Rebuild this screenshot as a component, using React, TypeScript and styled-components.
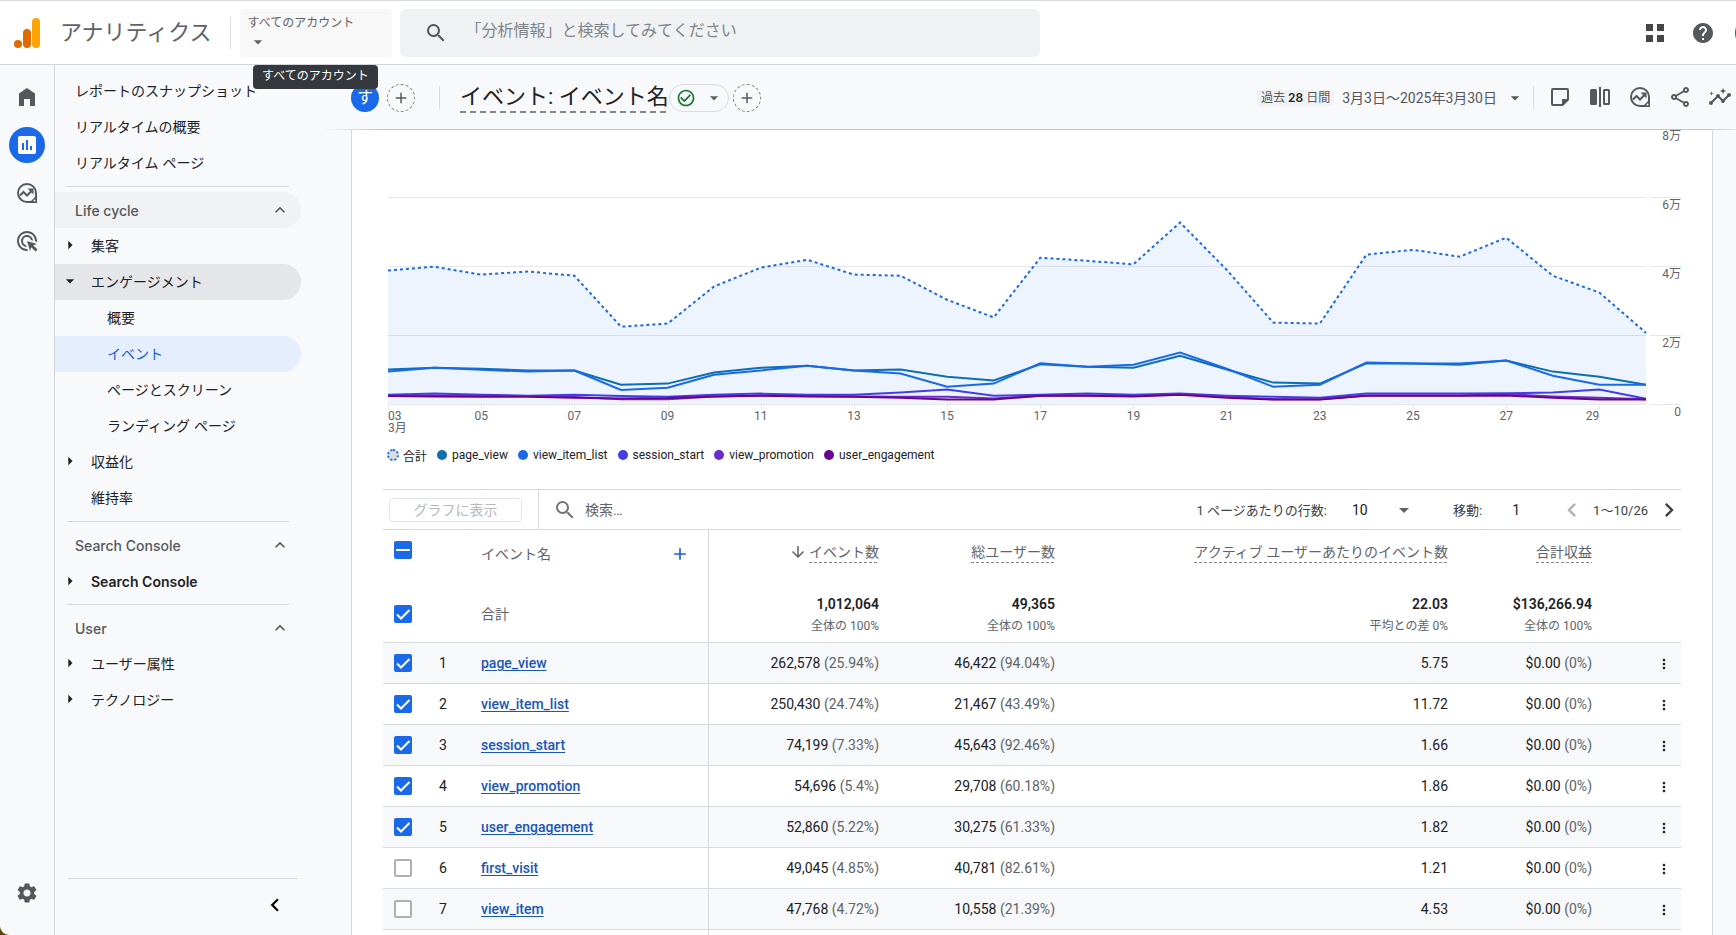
import React, { useLayoutEffect, useRef, useState } from "react";
import styled, { createGlobalStyle, css } from "styled-components";
import {
  MdAdd,
  MdAdsClick,
  MdArrowDownward,
  MdArrowDropDown,
  MdCheckCircleOutline,
  MdChevronLeft,
  MdChevronRight,
  MdExpandLess,
  MdHelp,
  MdInsertChart,
  MdInsights,
  MdMoreVert,
  MdOutlineShare,
  MdSearch,
  MdSettings,
} from "react-icons/md";

const text = `Roboto, "Noto Sans CJK JP", sans-serif`;
const brand = `Inter, "Noto Sans CJK JP", sans-serif`;

const Global = createGlobalStyle`
  * { box-sizing: border-box; }
  body { margin: 0; background: #5a4600; font-family: ${text}; font-size: 14px; color: #202124; }
  button, input, select { font: inherit; color: inherit; }
  button { border: 0; padding: 0; background: none; cursor: pointer; }
  a { color: inherit; text-decoration: none; }
  svg { display: block; flex: none; }
`;

const Shell = styled.div`
  display: flex;
  flex-direction: column;
  height: 100vh;
  overflow: hidden;
  background: #f8f9fb;
  border-bottom-left-radius: 9px;
`;

/* Top bar */
const TopBar = styled.header`
  display: flex;
  align-items: center;
  flex: none;
  height: 65px;
  padding-left: 12px;
  background: #fff;
  border-top: 1px solid #dadce0;
  border-bottom: 1px solid #d2d5d9;
  overflow: hidden;
`;
const Brand = styled.a`
  display: flex;
  align-items: center;
  gap: 17px;
  color: #5f6368;
  font-size: 22px;
  line-height: 32px;
  white-space: nowrap;
`;
const Rule = styled.span<{ $h: number; $l: number; $r: number }>`
  flex: none;
  width: 1px;
  height: ${(p) => p.$h}px;
  margin: 0 ${(p) => p.$r}px 0 ${(p) => p.$l}px;
  background: #dadce0;
`;
const Account = styled.button`
  display: flex;
  flex-direction: column;
  align-items: flex-start;
  flex: none;
  width: 152px;
  height: 48px;
  padding: 5px 8px;
  border-radius: 4px;
  background: #f8f8f8;
  color: #5f6368;
  font-size: 12px;
  line-height: 18px;
`;
const SearchBox = styled.label`
  display: flex;
  align-items: center;
  gap: 18px;
  flex: 0 1 640px;
  height: 48px;
  margin-left: 8px;
  padding: 0 24px;
  border-radius: 6px;
  background: #eff1f3;
  color: #50555a;
  input {
    flex: 1;
    min-width: 0;
    border: 0;
    outline: 0;
    padding: 0 0 4px;
    background: none;
    font-size: 16px;
  }
  input::placeholder { color: #80868b; opacity: 1; }
`;
const TopActions = styled.div`
  display: flex;
  align-items: center;
  gap: 24px;
  margin-left: auto;
  color: #54585d;
`;
const Avatar = styled.span`
  flex: none;
  width: 32px;
  height: 32px;
  margin: 0 -31px 0 -4px;
  border-radius: 50%;
  background: #00796b;
`;

/* Left columns */
const Body = styled.div`
  display: flex;
  flex: 1;
  min-height: 0;
`;
const Rail = styled.nav`
  display: flex;
  flex-direction: column;
  align-items: center;
  gap: 12px;
  flex: none;
  width: 55px;
  padding: 14px 0 20px;
  border-right: 1px solid #d2d5d9;
  color: #54585d;
`;
const RailButton = styled.button<{ $active?: boolean; $bottom?: boolean }>`
  display: grid;
  place-items: center;
  width: 36px;
  height: 36px;
  border-radius: 50%;
  ${(p) => p.$active && css`background: #1a69e8; color: #fff;`}
  ${(p) => p.$bottom && css`margin-top: auto; margin-bottom: 4px;`}
`;
const Side = styled.nav`
  display: flex;
  flex-direction: column;
  flex: none;
  width: 266px;
  padding: 8px 20px 0 0;
`;
const Item = styled.a<{ $level: number; $tone?: "open" | "active"; $bold?: boolean }>`
  display: flex;
  align-items: center;
  flex: none;
  height: 36px;
  padding-bottom: ${(p) => (p.$bold ? 0 : 3)}px;
  padding-left: ${(p) => [20, 0, 52][p.$level]}px;
  border-radius: 0 18px 18px 0;
  white-space: nowrap;
  font-family: ${brand};
  font-weight: ${(p) => (p.$bold ? 600 : 400)};
  background: ${(p) => ({ open: "#e5e6e9", active: "#e4eefd", none: "transparent" })[p.$tone ?? "none"]};
  color: ${(p) => (p.$tone === "active" ? "#1a5fd6" : "#202124")};
`;
const Twisty = styled.span<{ $open?: boolean }>`
  display: grid;
  place-items: center;
  width: 36px;
  padding-right: 6px;
  svg { transform: rotate(${(p) => (p.$open ? 0 : -90)}deg); }
`;
const Section = styled.button<{ $shaded?: boolean }>`
  display: flex;
  align-items: center;
  justify-content: space-between;
  flex: none;
  height: 36px;
  padding: 0 11px 0 20px;
  border-radius: 0 18px 18px 0;
  background: ${(p) => (p.$shaded ? "#f1f2f4" : "transparent")};
  color: #54585d;
  font-family: ${brand};
  font-weight: 500;
`;
const SideRule = styled.hr<{ $bottom?: boolean }>`
  flex: none;
  height: 1px;
  width: ${(p) => (p.$bottom ? 230 : 222)}px;
  margin: ${(p) => (p.$bottom ? "auto 0 0 13px" : "5px 0 5px 12px")};
  border: 0;
  background: #d6d8db;
`;
const Collapse = styled.button`
  display: grid;
  place-items: center;
  flex: none;
  align-self: flex-end;
  width: 36px;
  height: 36px;
  margin: 8px 8px 12px 0;
  color: #000;
`;

/* Report */
const Main = styled.main`
  display: flex;
  flex-direction: column;
  flex: 1;
  min-width: 0;
`;
const ReportBar = styled.div`
  display: flex;
  align-items: center;
  flex: none;
  height: 65px;
  padding: 2px 0 0 30px;
  overflow: hidden;
  white-space: nowrap;
  border-bottom: 1px solid;
  border-image: linear-gradient(90deg, transparent, #c4c6c9 60px, #c4c6c9 calc(100% - 30px), #e8eaed) 1;
`;
const Chip = styled.button`
  display: grid;
  place-items: center;
  flex: none;
  width: 28px;
  height: 28px;
  margin-right: 8px;
  border-radius: 50%;
  background: #1a69e8;
  color: #fff;
  font-size: 16px;
  line-height: 20px;
`;
const AddChip = styled.button`
  display: grid;
  place-items: center;
  flex: none;
  width: 28px;
  height: 28px;
  border: 1px dashed #80868b;
  border-radius: 50%;
  color: #54585d;
`;
const Title = styled.h1`
  margin: 0;
  padding-bottom: 2px;
  font-size: 22px;
  line-height: 28px;
  font-weight: 400;
  background: repeating-linear-gradient(90deg, #80868b 0 6px, transparent 6px 10px) bottom / 100% 2px no-repeat;
`;
const Status = styled.button`
  display: flex;
  align-items: center;
  justify-content: space-between;
  flex: none;
  width: 60px;
  height: 28px;
  margin-right: 4px;
  padding: 0 4px 0 6px;
  border: 1px solid #dadce0;
  border-radius: 14px;
  color: #5f6368;
`;
const DateRange = styled.button`
  display: flex;
  align-items: center;
  gap: 8px;
  margin-left: auto;
  color: #54585d;
  line-height: 20px;
`;
const Period = styled.span`
  padding: 0 4px;
  background: #f0f1f2;
  font-size: 12px;
  line-height: 16px;
  b { font-family: ${brand}; font-weight: 600; color: #202124; }
`;
const Tools = styled.div`
  display: flex;
  flex: none;
  gap: 16px;
  margin-right: 4px;
  padding-bottom: 2px;
  color: #54585d;
`;
const Scroller = styled.div`
  flex: 1;
  min-height: 0;
  overflow: auto;
  scrollbar-width: none;
  padding: 0 23px 0 30px;
`;
const Card = styled.section`
  padding: 0 31px;
  border: solid #d6d8db;
  border-width: 0 1px;
  background: #fff;
`;
const ChartBox = styled.div`
  height: 312px;
  padding-left: 5px;
  text { font-size: 12px; fill: #5f6368; }
`;
const Legend = styled.ul`
  display: flex;
  align-items: center;
  gap: 10px;
  height: 26px;
  margin: 0 0 21px;
  padding: 0 0 0 4px;
  list-style: none;
  font-size: 12px;
  li { display: flex; align-items: center; gap: 5px; }
`;
const Dot = styled.i<{ $c: string; $total?: boolean }>`
  width: 10px;
  height: 10px;
  border-radius: 50%;
  background: ${(p) => p.$c};
  ${(p) => p.$total && css`width: 12px; height: 12px; margin-right: -1px; border: 2px dotted #1a69e8;`}
`;

/* Table */
const TableBar = styled.div`
  display: flex;
  align-items: center;
  height: 41px;
  border: solid #d6d8db;
  border-width: 1px 0;
  color: #3c4043;
  font-size: 13px;
  white-space: nowrap;
`;
const PlotButton = styled.button`
  flex: none;
  width: 133px;
  height: 24px;
  margin-left: 6px;
  border: 1px solid #e4e5e7;
  border-radius: 4px;
  color: #b6b8bb;
  font-size: 14px;
  line-height: 20px;
`;
const Find = styled.label`
  display: flex;
  align-items: center;
  gap: 8px;
  flex: 1;
  min-width: 0;
  color: #70757a;
  input { width: 100%; border: 0; outline: 0; padding: 0; background: none; font-size: 14px; }
  input::placeholder { color: #5f6368; opacity: 1; }
`;
const RowsSelect = styled.select`
  width: 40px;
  margin-left: 25px;
  border: 0;
  appearance: none;
  background: none;
  font-size: 14px;
  color: #202124;
`;
const Pager = styled.div`
  display: flex;
  align-items: center;
  flex: none;
  gap: 7px;
  margin-right: -2px;
`;
const PageLabel = styled.label`
  margin-left: 37px;
`;
const PageInput = styled.input`
  width: 24px;
  margin: 0 30px 0 22px;
  border: 0;
  padding: 0;
  text-align: center;
  font-size: 14px;
  background: none;
  color: #202124;
`;
const PageButton = styled.button`
  width: 28px;
  display: grid;
  place-items: center;
  color: #3c4043;
  &:disabled { color: #b0b3b6; }
`;
const Table = styled.table`
  width: 100%;
  table-layout: fixed;
  border-collapse: separate;
  border-spacing: 0;
  th, td { padding: 0 16px 0 0; text-align: right; font-weight: 400; white-space: nowrap; }
  .pick { padding: 0 0 0 11px; text-align: left; }
  .num { padding: 0; text-align: center; }
  .name { padding: 0 18px 0 20px; text-align: left; border-right: 1px solid #d6d8db; }
  .menu { padding: 0 9px 0 0; }
`;
const HeadRow = styled.tr`
  height: 56px;
  color: #5f6368;
  th { padding-top: 11px; vertical-align: top; line-height: 20px; }
  .pick { padding-top: 11px; }
  .name { padding-top: 14px; }
`;
const TotalRow = styled.tr`
  height: 57px;
  td, th { border-bottom: 1px solid #d6d8db; line-height: 20px; }
  .name { color: #5f6368; }
  b { display: block; margin-top: 2px; font-weight: 600; }
  small { display: block; margin-top: 2px; font-size: 12px; color: #5f6368; line-height: 20px; }
`;
const DataRow = styled.tr<{ $shade: boolean }>`
  height: 41px;
  background: ${(p) => (p.$shade ? "#f6f8fa" : "#fff")};
  td, th { border-bottom: 1px solid #d6d8db; }
`;
const Split = styled.div`
  display: flex;
  align-items: center;
  justify-content: space-between;
`;
const AddDim = styled.button`
  color: #1a5fd6;
  display: grid;
`;
const Metric = styled.button`
  display: inline-flex;
  align-items: center;
  gap: 2px;
  line-height: 22px;
  span {
    background: repeating-linear-gradient(90deg, #80868b 0 3px, transparent 3px 5px) bottom / 100% 1px no-repeat;
  }
`;
const Tick = styled.input`
  display: block;
  appearance: none;
  width: 18px;
  height: 18px;
  margin: 0;
  border: 2px solid #b0b0b0;
  border-radius: 2px;
  background: #fff;
  &:checked {
    border: 0;
    background: #1a69e8
      url("data:image/svg+xml,%3Csvg xmlns='http://www.w3.org/2000/svg' viewBox='0 0 18 18'%3E%3Cpath d='M3 9.5l4 4L15.5 5' fill='none' stroke='white' stroke-width='2'/%3E%3C/svg%3E");
  }
  &[aria-checked="mixed"] {
    border: 0;
    background: linear-gradient(#fff, #fff) center / 14px 2px no-repeat #1a69e8;
  }
`;
const EventLink = styled.a`
  color: #1a56b8;
  font-weight: 500;
  text-decoration: underline;
  text-underline-offset: 2px;
`;
const Share = styled.span`
  color: #5f6368;
`;
const MenuButton = styled.button`
  display: inline-grid;
  vertical-align: middle;
`;
const Tip = styled.div`
  position: absolute;
  top: 65px;
  left: 253px;
  height: 24px;
  padding: 0 9px;
  border-radius: 4px;
  background: #35393d;
  color: #fff;
  font-size: 12px;
  line-height: 22px;
`;

const ExploreIcon = () => (
  <svg width="24" height="24" viewBox="0 0 24 24" fill="none" stroke="currentColor" strokeWidth="2">
    <path d="M21 12a9 9 0 1 0-9 9h9z" />
    <path d="M21 15v6h-6z" fill="currentColor" stroke="none" />
    <circle cx="19.5" cy="19.500" r="1" fill="#f8f9fb" stroke="none" />
    <path d="M5 14.500l3.500-3.500 3.500 3.500 4.500-4.500" />
    <path d="M12.500 7.500h6v6z" fill="currentColor" stroke="none" />
  </svg>
);
const HomeIcon = () => (
  <svg width="24" height="24" viewBox="0 0 24 24" fill="currentColor">
    <path d="M4 21V8.500L12 3l8 5.500V21h-5v-7H9v7z" />
  </svg>
);
const NoteIcon = () => (
  <svg width="24" height="24" viewBox="0 0 24 24" fill="currentColor">
    <path fillRule="evenodd" d="M5 3h14a2 2 0 0 1 2 2v10l-6 6H5a2 2 0 0 1-2-2V5a2 2 0 0 1 2-2zM5 5v14h9v-5h5V5z" />
  </svg>
);
const CompareIcon = () => (
  <svg width="24" height="24" viewBox="0 0 24 24" fill="currentColor">
    <rect x="2" y="4" width="7" height="16" rx="1.500" />
    <rect x="11" y="2" width="2" height="20" />
    <path fillRule="evenodd" d="M16.500 4h4q1.500 0 1.500 1.500v13q0 1.500-1.500 1.500h-4q-1.500 0-1.500-1.500v-13q0-1.500 1.500-1.500zM17 6v12h3V6z" />
  </svg>
);
const Logo = () => (
  <svg width="31" height="32" viewBox="0 0 31 32">
    <circle cx="6" cy="27" r="4" fill="#e06a00" />
    <rect x="11" y="12" width="8" height="19" rx="4" fill="#e06a00" />
    <rect x="20" y="1" width="8" height="30" rx="4" fill="#fba404" />
  </svg>
);
const AppsIcon = () => (
  <svg width="24" height="24" viewBox="0 0 24 24" fill="#444746">
    <path d="M3 3h7v7H3zM14 3h7v7h-7zM3 14h7v7H3zM14 14h7v7h-7z" />
  </svg>
);

const total = [387, 398, 375, 384, 372, 224, 233, 341, 395, 418, 375, 372, 302, 251, 424, 415, 405, 526, 389, 236, 233, 433, 447, 427, 482, 372, 323, 206];
const series = [
  { name: "page_view", color: "#0b6fb0", data: [100, 105, 102, 97, 97, 56, 59, 91, 105, 111, 97, 100, 79, 68, 115, 108, 105, 140, 100, 62, 59, 118, 117, 114, 126, 94, 79, 56] },
  { name: "view_item_list", color: "#1a69e8", data: [94, 105, 99, 94, 97, 41, 47, 85, 97, 111, 97, 88, 50, 59, 118, 108, 114, 149, 102, 50, 56, 120, 117, 117, 126, 82, 56, 56] },
  { name: "session_start", color: "#423ee8", data: [27, 30, 27, 24, 27, 23, 21, 27, 30, 27, 27, 33, 42, 24, 27, 30, 27, 30, 24, 21, 18, 30, 30, 30, 31, 33, 42, 15] },
  { name: "view_promotion", color: "#6b2bcd", data: [24, 25, 24, 23, 20, 14, 14, 22, 25, 23, 22, 21, 21, 16, 24, 25, 23, 28, 21, 14, 14, 25, 25, 25, 29, 22, 18, 14] },
  { name: "user_engagement", color: "#68058c", data: [23, 22, 21, 21, 18, 16, 17, 22, 24, 22, 21, 18, 13, 13, 24, 24, 22, 27, 18, 13, 13, 24, 24, 24, 25, 18, 13, 13] },
];

/* Daily counts are held in hundreds; one grid step is 200. */
function Chart() {
  const box = useRef<HTMLDivElement>(null);
  const [width, setWidth] = useState(1292);
  useLayoutEffect(() => {
    const measure = () => box.current && setWidth(box.current.clientWidth - 5);
    measure();
    window.addEventListener("resize", measure);
    return () => window.removeEventListener("resize", measure);
  }, []);
  const plot = width - 35;
  const base = 274;
  const x = (i: number) => (i * plot) / 27;
  const y = (v: number) => base - (v * 69) / 200;
  const line = (d: number[]) => d.map((v, i) => `${x(i).toFixed(1)},${y(v).toFixed(1)}`).join(" ");
  return (
    <ChartBox ref={box}>
      <svg width={width} height="312" role="img" aria-label="イベント数の推移">
        {[0, 200, 400, 600].map((v) => (
          <path key={v} d={`M0 ${y(v) + 0.5}H${plot}M${plot + 4} ${y(v) + 0.5}H${width}`} stroke="#e6e7e9" />
        ))}
        {[0, 200, 400, 600, 800].map((v) => (
          <text key={v} x={width} y={y(v) + 12} textAnchor="end">{v ? `${v / 100}万` : "0"}</text>
        ))}
        <polygon points={`0,${base} ${line(total)} ${plot},${base}`} fill="#1a73e8" fillOpacity="0.08" />
        <polyline points={line(total)} fill="none" stroke="#1a69e8" strokeWidth="2" strokeDasharray="3 3" />
        {series.map((s) => (
          <polyline key={s.name} points={line(s.data)} fill="none" stroke={s.color} strokeWidth="2" />
        ))}
        {total.map((_, i) =>
          i % 2 ? null : (
            <g key={i}>
              <path d={`M${Math.round(x(i)) + 0.5} ${base}v5`} stroke="#e6e7e9" />
              <text x={i === 26 ? x(i) - 7 : x(i)} y={base + 16} textAnchor={i ? "middle" : "start"}>
                {String(i + 3).padStart(2, "0")}
              </text>
            </g>
          )
        )}
        <text x="0" y={base + 28}>3月</text>
      </svg>
    </ChartBox>
  );
}

const rows = [
  ["page_view", "262,578", "25.94%", "46,422", "94.04%", "5.75"],
  ["view_item_list", "250,430", "24.74%", "21,467", "43.49%", "11.72"],
  ["session_start", "74,199", "7.33%", "45,643", "92.46%", "1.66"],
  ["view_promotion", "54,696", "5.4%", "29,708", "60.18%", "1.86"],
  ["user_engagement", "52,860", "5.22%", "30,275", "61.33%", "1.82"],
  ["first_visit", "49,045", "4.85%", "40,781", "82.61%", "1.21"],
  ["view_item", "47,768", "4.72%", "10,558", "21.39%", "4.53"],
];

const Parent = ({ label, open, bold }: { label: string; open?: boolean; bold?: boolean }) => (
  <Item href="#" $level={1} $tone={open ? "open" : undefined} $bold={bold}>
    <Twisty $open={open}><MdArrowDropDown size={20} /></Twisty>
    {label}
  </Item>
);
const Group = ({ label, shaded }: { label: string; shaded?: boolean }) => (
  <Section $shaded={shaded}>{label}<MdExpandLess size={20} /></Section>
);
const Cell = ({ value, share }: { value: string; share: string }) => (
  <td>{value} <Share>({share})</Share></td>
);

export default function App() {
  return (
    <Shell>
      <Global />
      <TopBar>
        <Brand href="#"><Logo />アナリティクス</Brand>
        <Rule $h={32} $l={18} $r={9} />
        <Account>すべてのアカウント<MdArrowDropDown size={20} /></Account>
        <SearchBox>
          <MdSearch size={24} />
          <input placeholder="「分析情報」と検索してみてください" aria-label="検索" />
        </SearchBox>
        <TopActions>
          <button aria-label="アプリ"><AppsIcon /></button>
          <button aria-label="ヘルプ"><MdHelp size={24} /></button>
          <Avatar />
        </TopActions>
      </TopBar>
      <Body>
        <Rail>
          <RailButton aria-label="ホーム"><HomeIcon /></RailButton>
          <RailButton aria-label="レポート" $active><MdInsertChart size={24} /></RailButton>
          <RailButton aria-label="探索"><ExploreIcon /></RailButton>
          <RailButton aria-label="広告"><MdAdsClick size={24} /></RailButton>
          <RailButton aria-label="管理" $bottom><MdSettings size={24} /></RailButton>
        </Rail>
        <Side>
          <Item href="#" $level={0}>レポートのスナップショット</Item>
          <Item href="#" $level={0}>リアルタイムの概要</Item>
          <Item href="#" $level={0}>リアルタイム ページ</Item>
          <SideRule />
          <Group label="Life cycle" shaded />
          <Parent label="集客" />
          <Parent label="エンゲージメント" open />
          <Item href="#" $level={2}>概要</Item>
          <Item href="#" $level={2} $tone="active">イベント</Item>
          <Item href="#" $level={2}>ページとスクリーン</Item>
          <Item href="#" $level={2}>ランディング ページ</Item>
          <Parent label="収益化" />
          <Item href="#" $level={1}><Twisty />維持率</Item>
          <SideRule />
          <Group label="Search Console" />
          <Parent label="Search Console" bold />
          <SideRule />
          <Group label="User" />
          <Parent label="ユーザー属性" />
          <Parent label="テクノロジー" />
          <SideRule $bottom />
          <Collapse aria-label="折りたたむ"><MdChevronLeft size={26} /></Collapse>
        </Side>
        <Main>
          <ReportBar>
            <Chip>す</Chip>
            <AddChip aria-label="比較を追加"><MdAdd size={18} /></AddChip>
            <Rule $h={24} $l={24} $r={20} />
            <Title>イベント: イベント名</Title>
            <Status aria-label="ステータス">
              <MdCheckCircleOutline size={20} color="#137333" />
              <MdArrowDropDown size={20} />
            </Status>
            <AddChip aria-label="フィルタを追加"><MdAdd size={18} /></AddChip>
            <DateRange>
              <Period>過去 <b>28</b> 日間</Period>
              3月3日〜2025年3月30日
              <MdArrowDropDown size={20} />
            </DateRange>
            <Rule $h={24} $l={8} $r={14} />
            <Tools>
              <button aria-label="メモ"><NoteIcon /></button>
              <button aria-label="比較"><CompareIcon /></button>
              <button aria-label="探索"><ExploreIcon /></button>
              <button aria-label="共有"><MdOutlineShare size={24} /></button>
              <button aria-label="分析情報"><MdInsights size={24} /></button>
            </Tools>
          </ReportBar>
          <Scroller>
            <Card>
              <Chart />
              <Legend>
                <li><Dot $c="#dadce0" $total />合計</li>
                {series.map((s) => (
                  <li key={s.name}><Dot $c={s.color} />{s.name}</li>
                ))}
              </Legend>
              <TableBar>
                <PlotButton disabled>グラフに表示</PlotButton>
                <Rule $h={39} $l={16} $r={14} />
                <Find>
                  <MdSearch size={24} />
                  <input placeholder="検索…" aria-label="表を検索" />
                </Find>
                <label htmlFor="rows">1 ページあたりの行数:</label>
                <RowsSelect id="rows"><option>10</option></RowsSelect>
                <MdArrowDropDown size={24} color="#5f6368" />
                <PageLabel htmlFor="page">移動:</PageLabel>
                <PageInput id="page" defaultValue="1" />
                <Pager>
                  <PageButton disabled aria-label="前へ"><MdChevronLeft size={28} /></PageButton>
                  1〜10/26
                  <PageButton aria-label="次へ"><MdChevronRight size={28} /></PageButton>
                </Pager>
              </TableBar>
              <Table>
                <colgroup>
                  <col width="42" /><col width="36" /><col width="248" /><col width="186" />
                  <col width="176" /><col /><col width="144" /><col width="73" />
                </colgroup>
                <thead>
                  <HeadRow>
                    <th className="pick"><Tick type="checkbox" aria-checked="mixed" aria-label="すべて選択" /></th>
                    <th />
                    <th className="name">
                      <Split>イベント名<AddDim aria-label="ディメンションを追加"><MdAdd size={20} /></AddDim></Split>
                    </th>
                    <th><Metric><MdArrowDownward size={18} /><span>イベント数</span></Metric></th>
                    <th><Metric><span>総ユーザー数</span></Metric></th>
                    <th><Metric><span>アクティブ ユーザーあたりのイベント数</span></Metric></th>
                    <th><Metric><span>合計収益</span></Metric></th>
                    <th />
                  </HeadRow>
                </thead>
                <tbody>
                  <TotalRow>
                    <td className="pick"><Tick type="checkbox" defaultChecked aria-label="合計" /></td>
                    <td />
                    <td className="name">合計</td>
                    <td><b>1,012,064</b><small>全体の 100%</small></td>
                    <td><b>49,365</b><small>全体の 100%</small></td>
                    <td><b>22.03</b><small>平均との差 0%</small></td>
                    <td><b>$136,266.94</b><small>全体の 100%</small></td>
                    <td />
                  </TotalRow>
                  {rows.map(([name, events, eventShare, users, userShare, avg], i) => (
                    <DataRow key={name} $shade={i % 2 === 0}>
                      <td className="pick"><Tick type="checkbox" defaultChecked={i < 5} aria-label={name} /></td>
                      <td className="num">{i + 1}</td>
                      <td className="name"><EventLink href="#">{name}</EventLink></td>
                      <Cell value={events} share={eventShare} />
                      <Cell value={users} share={userShare} />
                      <td>{avg}</td>
                      <Cell value="$0.00" share="0%" />
                      <td className="menu"><MenuButton aria-label="メニュー"><MdMoreVert size={16} /></MenuButton></td>
                    </DataRow>
                  ))}
                  <DataRow $shade={false}>
                    <td className="pick" /><td /><td className="name" /><td /><td /><td /><td /><td />
                  </DataRow>
                </tbody>
              </Table>
            </Card>
          </Scroller>
        </Main>
      </Body>
      <Tip role="tooltip">すべてのアカウント</Tip>
    </Shell>
  );
}
